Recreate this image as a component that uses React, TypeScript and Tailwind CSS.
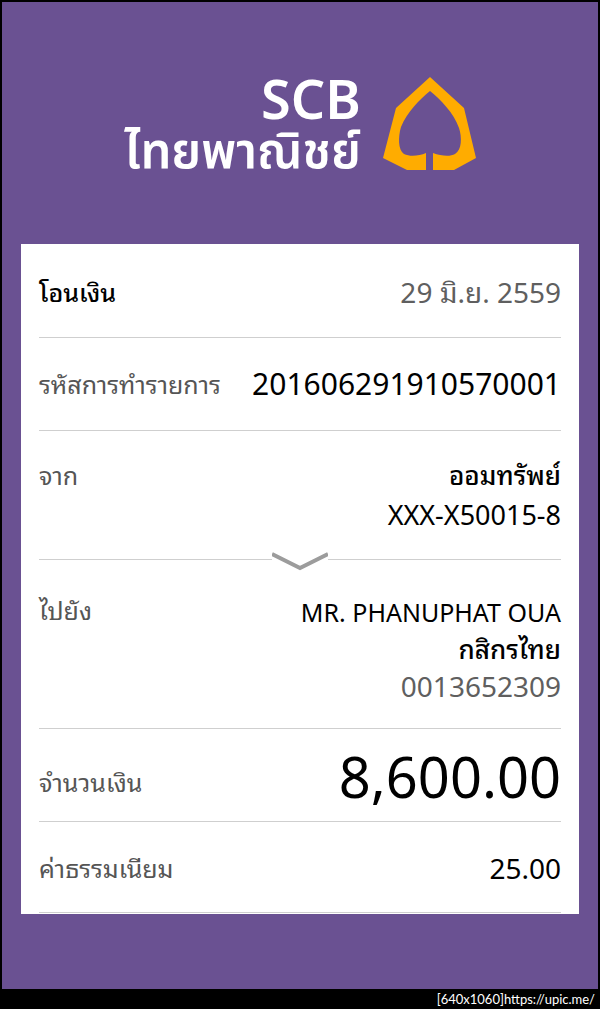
import React from "react";
import clsx from "clsx";

const FONT = "font-['Noto_Sans','Noto_Sans_Thai_Looped','Loma','Noto_Sans_Thai',sans-serif]";
const LOGO_FONT = "font-['Noto_Sans','Noto_Sans_Thai',sans-serif]";

interface RowProps {
  label: string;
  labelClass?: string;
  className?: string;
  children: React.ReactNode;
}

const Row = ({ label, labelClass = "text-[#555555] leading-10", className, children }: RowProps) => (
  <div className={clsx("flex justify-between gap-4 border-b border-[#cfcfcf]", className)}>
    <dt className={clsx("shrink-0 text-[25px]", labelClass)}>{label}</dt>
    <dd className="text-right text-black">{children}</dd>
  </div>
);

const BankLogo = () => (
  <div className="flex items-center justify-center gap-[22px]">
    <div className={clsx("text-right font-semibold text-white", LOGO_FONT)}>
      <p className="text-[54px] leading-[52px]">SCB</p>
      <p className="text-[49px] leading-[50px]">ไทยพาณิชย์</p>
    </div>
    <svg viewBox="0 0 93 93" className="h-[93px] w-[93px] fill-[#ffac00]" aria-hidden="true">
      <path d="M47 0 L81 31 L93 81 L71 93 H50 V76 C58 79 67 80 72 77 C79 73 79 60 76 51 C71 36 57 22 47 14 C37 22 24 35 18 50 C15 60 15 73 21 77 C27 80 36 79 43 76 V93 H24 L0 81 L13 31 Z" />
    </svg>
  </div>
);

const Chevron = () => (
  <svg
    viewBox="0 0 56 20"
    className="absolute -bottom-3 left-1/2 h-5 w-14 -translate-x-1/2 bg-white fill-none stroke-[#9c9c9c]"
    strokeWidth="4"
    aria-hidden="true"
  >
    <path d="M0 3 L28 17 L56 3" />
  </svg>
);

export default function App() {
  return (
    <div className={clsx("flex min-h-screen flex-col bg-black px-[2px] pt-[2px]", FONT)}>
      <main className="grow bg-[#6a5192] px-[19px] pt-[70px] pb-[74px]">
        <BankLogo />
        <dl className="mt-[70px] bg-white px-[18px] pb-px">
          <Row label="โอนเงิน" labelClass="text-black font-medium leading-10" className="pt-7 pb-[25px]">
            <p className="text-[28px] leading-10 text-[#5f5f5f]">29 มิ.ย. 2559</p>
          </Row>
          <Row label="รหัสการทำรายการ" className="pt-[26px] pb-[26px]">
            <p className="text-[30px] leading-10">201606291910570001</p>
          </Row>
          <Row label="จาก" className="relative py-6">
            <p className="text-[26px] leading-10 font-medium">ออมทรัพย์</p>
            <p className="text-[27px] leading-10">XXX-X50015-8</p>
            <Chevron />
          </Row>
          <Row label="ไปยัง" labelClass="text-[#555555] leading-8" className="pt-[34px] pb-[23px]">
            <p className="text-[25px] leading-[37px]">MR. PHANUPHAT OUA</p>
            <p className="text-[26px] leading-[37px] font-medium">กสิกรไทย</p>
            <p className="text-[28px] leading-[37px] text-[#5f5f5f]">0013652309</p>
          </Row>
          <Row label="จำนวนเงิน" className="items-end pt-[21px] pb-[19px]">
            <p className="text-[56px] leading-[52px]">8,600.00</p>
          </Row>
          <Row label="ค่าธรรมเนียม" className="pt-[26px] pb-6">
            <p className="text-[28px] leading-10">25.00</p>
          </Row>
        </dl>
      </main>
      <footer className="pr-[3px] text-right font-['Lato',sans-serif] text-[13px] leading-5 text-white">
        [640x1060]https://upic.me/
      </footer>
    </div>
  );
}
